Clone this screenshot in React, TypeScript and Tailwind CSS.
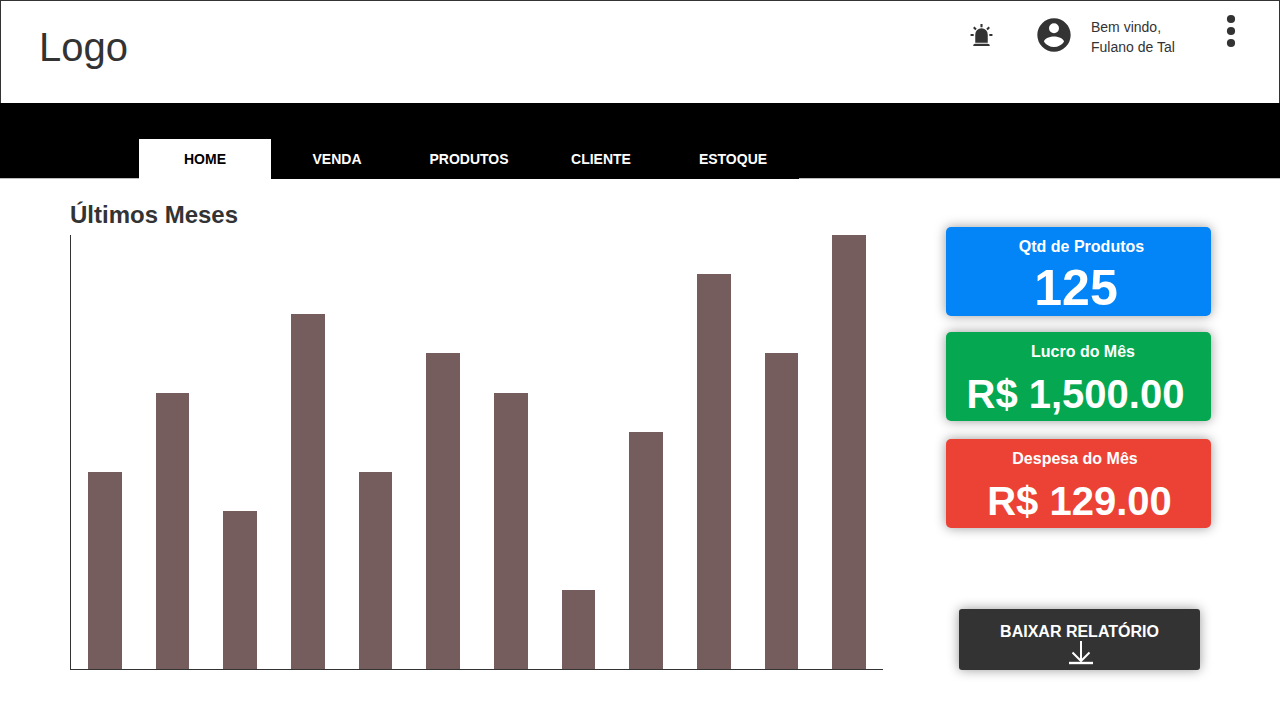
const tabs = ["HOME", "VENDA", "PRODUTOS", "CLIENTE", "ESTOQUE"];
const months = [5, 7, 4, 9, 5, 8, 7, 2, 6, 10, 8, 11];
const maxValue = 11;

const cards = [
  { label: "Qtd de Produtos", value: "125", color: "bg-[#0385f7]", labelPad: "pl-[6px]", valueClass: "pr-[5px] pt-[4px] text-[50px] leading-[56px]", gap: "mb-[16px]" },
  { label: "Lucro do Mês", value: "R$ 1,500.00", color: "bg-[#05a850]", labelPad: "pl-[9px]", valueClass: "pr-[6px] pt-[10px] text-[40px] leading-[46px]", gap: "mb-[18px]" },
  { label: "Despesa do Mês", value: "R$ 129.00", color: "bg-[#ec4235]", labelPad: "pr-[7px]", valueClass: "pl-[2px] pt-[10px] text-[40px] leading-[46px]", gap: "mb-[81px]" },
];

function AlarmIcon() {
  return (
    <svg viewBox="0 0 24 24" className="mt-[22px] size-[25px]" fill="#333333">
      <path d="M6,6.9L3.87,4.78L5.28,3.37L7.4,5.5L6,6.9M13,1V4H11V1H13M20.13,4.78L18,6.9L16.6,5.5L18.72,3.37L20.13,4.78M4.5,10.5V12.5H1.5V10.5H4.5M19.5,10.5H22.5V12.5H19.5V10.5M6,20H18A2,2 0 0,1 20,22H4A2,2 0 0,1 6,20M12,5A6,6 0 0,1 18,11V19H6V11A6,6 0 0,1 12,5Z" />
    </svg>
  );
}

function AccountIcon() {
  return (
    <svg viewBox="0 0 24 24" className="ml-[40px] mt-[14px] size-[40px]" fill="#333333">
      <path d="M12,19.2C9.5,19.2 7.29,17.92 6,16C6.03,14 10,12.9 12,12.9C14,12.9 17.97,14 18,16C16.71,17.92 14.5,19.2 12,19.2M12,5A3,3 0 0,1 15,8A3,3 0 0,1 12,11A3,3 0 0,1 9,8A3,3 0 0,1 12,5M12,2A10,10 0 0,0 2,12A10,10 0 0,0 12,22A10,10 0 0,0 22,12C22,6.47 17.5,2 12,2Z" />
    </svg>
  );
}

export default function App() {
  return (
    <div className="h-[720px] w-[1280px] overflow-hidden bg-white font-['Liberation_Sans',Arial,sans-serif] text-[#333333]">
      <header className="flex h-[103px] items-start border border-b-0 border-[#333333] bg-white">
        <div className="ml-[38px] mt-[23px] w-[930px] text-[40px] leading-[46px]">Logo</div>
        <AlarmIcon />
        <AccountIcon />
        <p className="ml-[17px] mt-[17px] w-[116px] text-[14px] leading-[19.5px]">
          Bem vindo,
          <br />
          Fulano de Tal
        </p>
        <svg viewBox="0 0 24 24" className="mt-[6px] size-[48px]" fill="#333333">
          <circle cx="12" cy="6" r="2.05" />
          <circle cx="12" cy="12" r="2.05" />
          <circle cx="12" cy="18" r="2.05" />
        </svg>
      </header>

      <nav className="flex h-[76px] items-end bg-black">
        <div className="h-px w-[139px] bg-[#bdbdbd]" />
        {tabs.map((tab, i) => (
          <a
            key={tab}
            className={`flex h-[40px] w-[132px] items-center justify-center text-[14px] font-bold ${
              i === 0 ? "bg-white text-black" : "bg-black text-white"
            }`}
          >
            {tab}
          </a>
        ))}
        <div className="h-px flex-1 bg-[#bdbdbd]" />
      </nav>

      <main className="flex items-start">
        <section className="ml-[70px] w-[813px] pt-[22px]">
          <h1 className="h-[34px] text-[24px] font-bold leading-[28px]">Últimos Meses</h1>
          <div className="flex h-[435px] items-end border-b border-l border-[#333333]">
            {months.map((value, i) => (
              <div key={i} className="flex h-full flex-1 items-end justify-center">
                <div className="w-1/2 bg-[#755d5d]" style={{ height: `${(value / maxValue) * 100}%` }} />
              </div>
            ))}
          </div>
        </section>

        <aside className="ml-[63px] flex w-[265px] flex-col pt-[48px] font-bold text-white">
          {cards.map((card) => (
            <div
              key={card.label}
              className={`h-[89px] rounded-[5px] pt-[11px] text-center shadow-[0_0_12px_rgba(0,0,0,0.4)] ${card.color} ${card.gap}`}
            >
              <div className={`text-[16px] leading-[18px] ${card.labelPad}`}>{card.label}</div>
              <div className={`whitespace-nowrap ${card.valueClass}`}>{card.value}</div>
            </div>
          ))}
          <button className="ml-[13px] flex h-[61px] w-[241px] flex-col items-center rounded-[3px] bg-[#333333] pt-[14px] shadow-[0_0_12px_rgba(0,0,0,0.4)]">
            <span className="text-[16px] leading-[18px]">BAIXAR RELATÓRIO</span>
            <svg viewBox="0 0 24 24" className="ml-[3px] size-[24px]" fill="none" stroke="white" strokeWidth="2">
              <path d="M12 0V20M3.5 11.5L12 20L20.5 11.5" />
              <path d="M0 22H24" strokeWidth="2.4" />
            </svg>
          </button>
        </aside>
      </main>
    </div>
  );
}
